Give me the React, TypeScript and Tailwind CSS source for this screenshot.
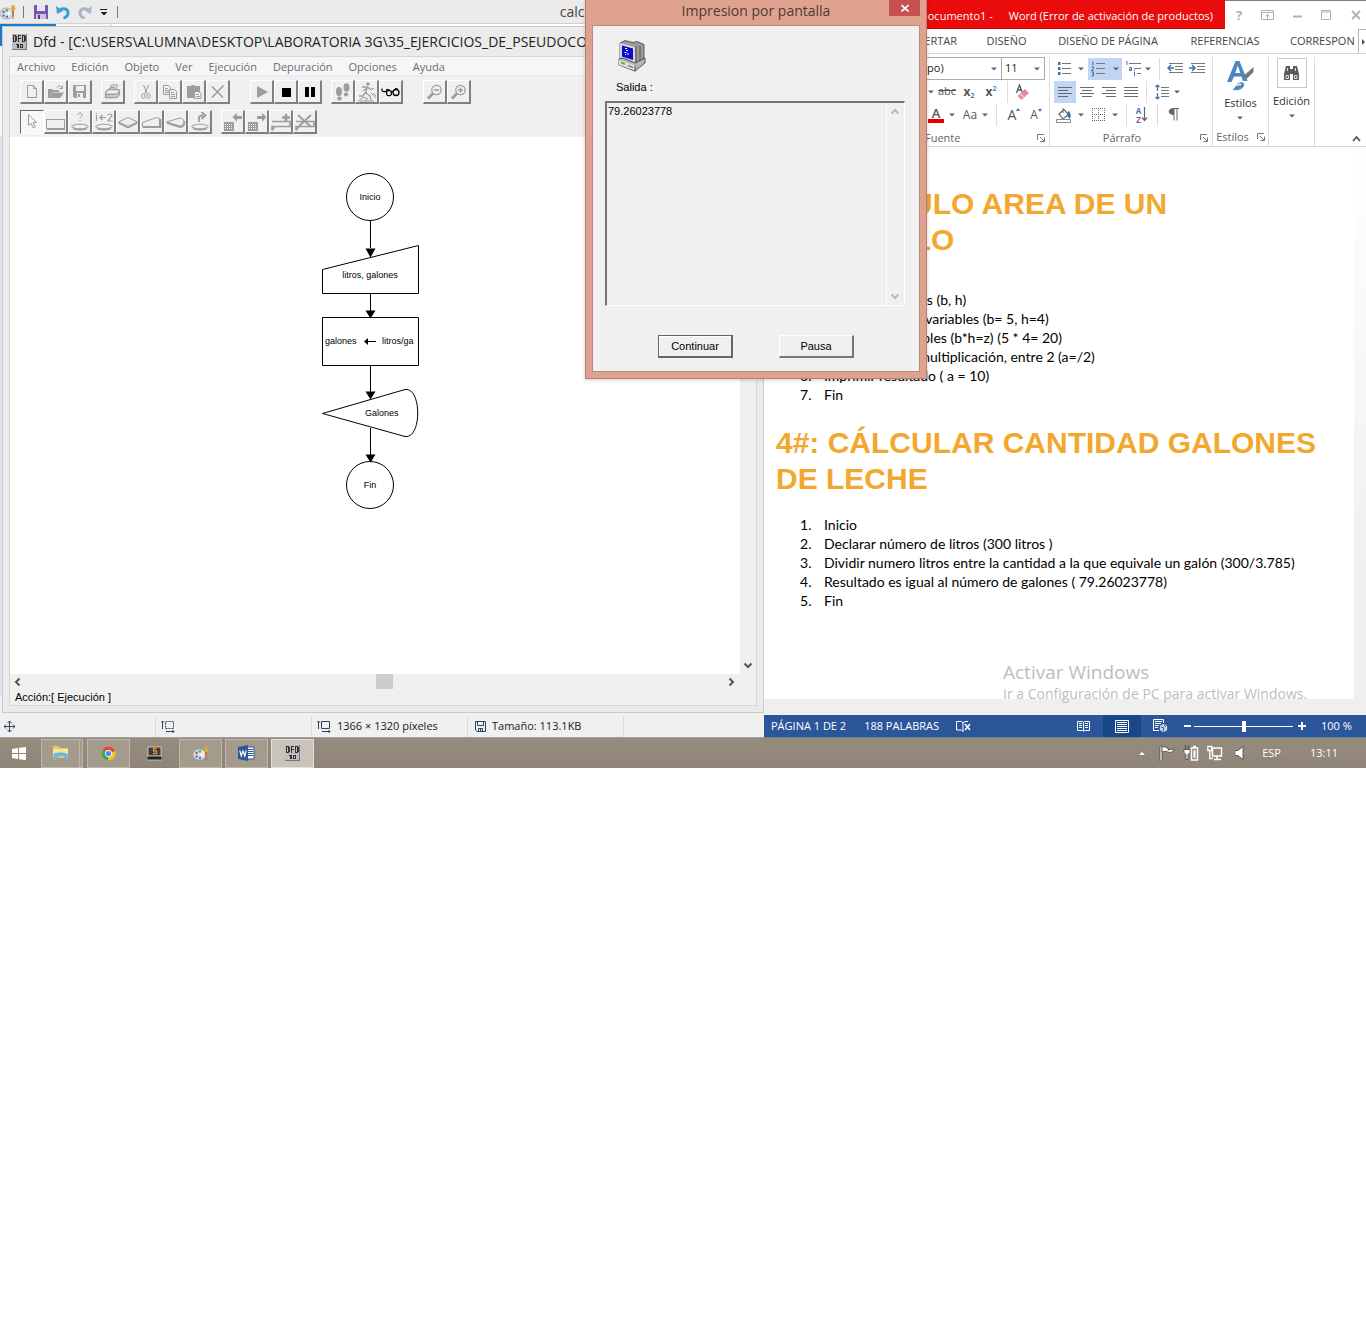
import React from "react";

type Kids = { children?: React.ReactNode };

/* ---------- shared pieces ---------- */

function Caret({ className = "text-[#666]" }: { className?: string }) {
  return (
    <svg width="6" height="4" viewBox="0 0 6 4" className={"shrink-0 " + className} aria-hidden="true">
      <path d="M0 0.5h6L3 3.5z" fill="currentColor" />
    </svg>
  );
}

function Pic({ w, h, children, crisp }: Kids & { w: number; h: number; crisp?: boolean }) {
  return (
    <svg
      width={w}
      height={h}
      viewBox={`0 0 ${w} ${h}`}
      fill="none"
      className="shrink-0"
      shapeRendering={crisp ? "crispEdges" : "auto"}
      aria-hidden="true"
    >
      {children}
    </svg>
  );
}

function PaletteIcon() {
  return (
    <Pic w={16} h={16}>
      <ellipse cx="6.5" cy="9.5" rx="6.5" ry="5.5" fill="#d5e8f0" stroke="#7fa3b5" strokeWidth="0.8" />
      <circle cx="3.5" cy="8" r="1.4" fill="#e05b3c" />
      <circle cx="6.8" cy="6.4" r="1.4" fill="#5fae4a" />
      <circle cx="3.6" cy="11.6" r="1.3" fill="#4a86d0" />
      <circle cx="7" cy="12.8" r="1.2" fill="#8a55b5" />
      <circle cx="8.6" cy="9.6" r="1.2" fill="#fff" />
      <path d="M12 1l2 0 1.5 4-1.5 2h-2l-1-3z" fill="#e9a33b" />
      <path d="M12 7h2l-0.5 8h-1z" fill="#c8692b" />
    </Pic>
  );
}

function DfdIcon() {
  return (
    <Pic w={15} h={16} crisp>
      <path d="M0 0h15v16H0z" fill="#bdbdbd" />
      <path d="M14 0h1v16H0v-1h14z" fill="#777" />
      <g fill="#333" fillRule="evenodd">
        <path d="M1 1h3v1h1v5H4v1H1zM2 2v5h1V2z" />
        <path d="M6 1h3v1H7v2h2v1H7v3H6z" />
        <path d="M10 1h3v1h1v5h-1v1h-3zM11 2v5h1V2z" />
        <path d="M4 10h3v4H5v-3H4zM8 10h3v4H8zM9 11v2h1v-2z" />
      </g>
    </Pic>
  );
}

/* ---------- flowchart editor toolbar ---------- */

const G = "#9d9d9d";

function Tool({ label, children, pressed }: Kids & { label: string; pressed?: boolean }) {
  return (
    <button
      type="button"
      aria-label={label}
      aria-pressed={pressed}
      className={
        pressed
          ? "flex h-6 w-6 items-center justify-center border border-b-white border-l-[#696969] border-r-white border-t-[#696969] bg-[#f7f7f7]"
          : "flex h-6 w-6 items-center justify-center border-b-2 border-l border-r-2 border-t border-b-[#808080] border-l-white border-r-[#808080] border-t-white bg-[#f0f0f0]"
      }
    >
      {children}
    </button>
  );
}

function ToolSet({ children }: Kids) {
  return <div className="flex">{children}</div>;
}

function FileTools() {
  return (
    <div className="flex pl-[10px]">
      <ToolSet>
        <Tool label="Nuevo">
          <Pic w={16} h={16}>
            <path d="M3.500 1.500h6l3 3v9h-9zM9.500 1.500v3h3" stroke={G} />
          </Pic>
        </Tool>
        <Tool label="Abrir">
          <Pic w={16} h={16}>
            <path d="M0 5h4l1 1h6v2H4l-3 6H0z" fill={G} />
            <path d="M4 8.500h12l-4 5.500H1z" fill={G} />
            <path d="M9 3.500c1-2 4-2 5 .5M14.500 1.500v3h-3" stroke={G} />
          </Pic>
        </Tool>
        <Tool label="Guardar">
          <Pic w={16} h={16} crisp>
            <path d="M1 1h13v13H2l-1-1zM4 2v5h8V2zM5 9v5h6V9z" fill={G} fillRule="evenodd" />
            <path d="M6 10h2v3H6z" fill={G} />
          </Pic>
        </Tool>
      </ToolSet>
      <div className="ml-[9px]">
        <Tool label="Imprimir">
          <Pic w={17} h={16}>
            <path d="M5.500 5.500l2-4.500h6l-2 4.500z" stroke={G} />
            <path d="M7 3.500h4M1.500 8.500l3-3h9l2 1v4l-3 3h-11zM1.500 10.500h11l3-3" stroke={G} strokeWidth="1.300" />
            <path d="M2 9h10v4H2z" fill={G} opacity=".3" />
          </Pic>
        </Tool>
      </div>
      <div className="ml-[9px] flex">
        <Tool label="Cortar">
          <Pic w={16} h={16}>
            <path d="M5.500 1l3.500 8.500M10.500 1L7 9.500" stroke={G} />
            <ellipse cx="5.500" cy="12" rx="1.600" ry="2.500" stroke={G} />
            <ellipse cx="10.500" cy="12" rx="1.600" ry="2.500" stroke={G} />
          </Pic>
        </Tool>
        <Tool label="Copiar">
          <Pic w={16} h={16}>
            <path d="M1.500 1.500h5l2 2v7h-7zM3 4.500h3M3 6.500h4M3 8.500h4" stroke={G} />
            <path d="M7.500 5.500h5l2 2v7h-7z" fill="#f0f0f0" stroke={G} />
            <path d="M9 8.500h3M9 10.500h4M9 12.500h4" stroke={G} />
          </Pic>
        </Tool>
        <Tool label="Pegar">
          <Pic w={16} h={16}>
            <path d="M1 2h4l1-1h2l1 1h5v12H1z" fill={G} />
            <path d="M8.500 7.500h4l2.500 2v5h-6.500z" fill="#f0f0f0" stroke={G} />
            <path d="M10 10.500h3M10 12.500h4" stroke={G} />
          </Pic>
        </Tool>
        <Tool label="Eliminar">
          <Pic w={16} h={16}>
            <path d="M2 2.500l11 11M13.500 1.500L2 13.500" stroke={G} strokeWidth="1.600" />
          </Pic>
        </Tool>
      </div>
      <div className="ml-5 flex">
        <Tool label="Ejecutar">
          <Pic w={14} h={14}>
            <path d="M2 1l11 6-11 6z" fill={G} />
          </Pic>
        </Tool>
        <Tool label="Detener">
          <Pic w={10} h={10} crisp>
            <path d="M1 1h9v9H1z" fill="#000" />
          </Pic>
        </Tool>
        <Tool label="Pausa">
          <Pic w={12} h={10} crisp>
            <path d="M1 0h4v10H1zM7 0h4v10H7z" fill="#000" />
          </Pic>
        </Tool>
      </div>
      <div className="ml-[9px] flex">
        <Tool label="Paso simple">
          <Pic w={18} h={18}>
            <ellipse cx="5" cy="8.500" rx="3" ry="4.500" fill={G} />
            <ellipse cx="5.500" cy="15.500" rx="2.200" ry="2" fill={G} />
            <ellipse cx="12.500" cy="4.500" rx="3" ry="4.300" fill={G} />
            <ellipse cx="12" cy="11.500" rx="2.200" ry="2" fill={G} />
          </Pic>
        </Tool>
        <Tool label="Ejecutar hasta">
          <Pic w={20} h={20}>
            <circle cx="11" cy="2" r="1.800" fill={G} />
            <path d="M5 5l5 0 4 2.500 3-1M10 5.500L9 11l4 3 1 4M9 10l-3 4-4 0M10 6l-4 3" stroke={G} strokeWidth="1.300" />
            <path d="M1 19l6-4 3 2M14 11l5 5M16 11l3 3M3 19h14M8 19l3-3" stroke={G} />
          </Pic>
        </Tool>
        <Tool label="Depurador">
          <Pic w={19} h={12}>
            <path d="M1 2.500v2c1 2 3 1 4 1M5 6l1-2.500 3 .5" stroke="#000" strokeWidth="1.200" />
            <rect x="5.700" y="4.600" width="4.600" height="5" rx="1.500" stroke="#000" strokeWidth="1.300" />
            <circle cx="15" cy="6.500" r="3" stroke="#000" strokeWidth="1.300" />
            <path d="M10.500 5.500h2M14 2.500l3 .5" stroke="#000" />
          </Pic>
        </Tool>
      </div>
      <div className="ml-5 flex">
        <Tool label="Alejar">
          <Pic w={16} h={16}>
            <circle cx="9.500" cy="6" r="4.700" stroke={G} strokeWidth="1.300" />
            <path d="M7 6h5" stroke={G} strokeWidth="1.600" />
            <path d="M6 9.500l-5 5" stroke={G} strokeWidth="2.600" />
          </Pic>
        </Tool>
        <Tool label="Acercar">
          <Pic w={16} h={16}>
            <circle cx="9.500" cy="6" r="4.700" stroke={G} strokeWidth="1.300" />
            <path d="M7 6h5M9.500 3.500v5" stroke={G} strokeWidth="1.600" />
            <path d="M6 9.500l-5 5" stroke={G} strokeWidth="2.600" />
          </Pic>
        </Tool>
      </div>
    </div>
  );
}

function ObjectTools() {
  return (
    <div className="flex pl-[10px]">
      <ToolSet>
        <Tool label="Cursor" pressed>
          <Pic w={12} h={18}>
            <path d="M2.500 1.500v11l2.500-2.300 2.200 4.800 2-.9-2.200-4.700h3.500z" stroke={G} />
          </Pic>
        </Tool>
        <Tool label="Asignación">
          <Pic w={20} h={18} crisp>
            <path d="M0 6h19v10H0zM1 7v8h17V7z" fill={G} fillRule="evenodd" />
            <path d="M1 15h18v2H1z" fill={G} />
          </Pic>
        </Tool>
        <Tool label="Ciclo mientras">
          <Pic w={20} h={20}>
            <path d="M8 3c0-2.500 4-2.500 4 0 0 1.500-2 1.500-2 3.500M10 8v1.200" stroke={G} />
            <path d="M1.500 14.500c3-3 14-3 17 0-3 3-14 3-17 0z" stroke={G} />
            <path d="M3 16.500c4 1.500 10 1.500 14 0" stroke={G} strokeWidth="1.500" />
          </Pic>
        </Tool>
        <Tool label="Ciclo para">
          <Pic w={20} h={20}>
            <path d="M2.500 3v6M2.500 1v1M6 5.500h6M8.500 3L6 5.500 8.500 8M14 3.500c0-2 4-2 4 0L14 9h4.500" stroke={G} strokeWidth="1.200" />
            <path d="M1.500 14.500c3-3 14-3 17 0-3 3-14 3-17 0z" stroke={G} />
            <path d="M3 16.500c4 1.500 10 1.500 14 0" stroke={G} strokeWidth="1.500" />
          </Pic>
        </Tool>
        <Tool label="Decisión">
          <Pic w={20} h={16}>
            <path d="M.5 8L10 3.500 19.500 8 10 12.500z" stroke={G} />
            <path d="M1 9l9 4.500L19 9" stroke={G} strokeWidth="1.800" />
          </Pic>
        </Tool>
        <Tool label="Lectura">
          <Pic w={20} h={16}>
            <path d="M.5 8.500l14-5 3 1v8H.5z" stroke={G} />
            <path d="M.5 13h18V5" stroke={G} strokeWidth="1.800" />
          </Pic>
        </Tool>
        <Tool label="Salida">
          <Pic w={20} h={16}>
            <path d="M.5 8L14 4c5 0 5 8 0 8z" stroke={G} />
            <path d="M1 9l13 4c4 0 5-3 4-6" stroke={G} strokeWidth="1.800" />
          </Pic>
        </Tool>
        <Tool label="Llamada">
          <Pic w={20} h={20}>
            <path d="M9 10V5.500c0-1.500 1-2 4-2M11.500 0l4 3.500-4 3.500" stroke={G} strokeWidth="1.800" />
            <path d="M1.500 14.500c3-3 14-3 17 0-3 3-14 3-17 0z" stroke={G} />
            <path d="M3 16.500c4 1.500 10 1.500 14 0" stroke={G} strokeWidth="1.500" />
          </Pic>
        </Tool>
      </ToolSet>
      <div className="ml-[9px] flex">
        <Tool label="Subprograma anterior">
          <Pic w={20} h={20}>
            <path d="M1 10h10v9H1z" fill={G} />
            <path d="M9.500 5L14 1v3h5v3h-5v3z" fill={G} />
            <path d="M2 12.500h8M2 14.500h8M2 16.500h8" stroke="#f0f0f0" strokeDasharray="1 1" />
          </Pic>
        </Tool>
        <Tool label="Subprograma siguiente">
          <Pic w={20} h={20}>
            <path d="M1 10h10v9H1z" fill={G} />
            <path d="M19.500 5L15 1v3h-5v3h5v3z" fill={G} />
            <path d="M2 12.500h8M2 14.500h8M2 16.500h8" stroke="#f0f0f0" strokeDasharray="1 1" />
          </Pic>
        </Tool>
        <Tool label="Nuevo subprograma">
          <Pic w={20} h={18}>
            <path d="M1 8.500h18v5H1v4M19 13.500H4l-3 4" stroke={G} strokeWidth="1.700" />
            <path d="M11 4.500h8M15 1v7" stroke={G} strokeWidth="2.600" />
          </Pic>
        </Tool>
        <Tool label="Eliminar subprograma">
          <Pic w={20} h={18}>
            <path d="M1 8.500h18v5H1v4M19 13.500H4l-3 4" stroke={G} strokeWidth="1.700" />
            <path d="M3 2l13 12M16 2L3 14" stroke={G} strokeWidth="1.800" />
          </Pic>
        </Tool>
      </div>
    </div>
  );
}

/* ---------- flowchart ---------- */

function Flowchart() {
  return (
    <svg
      width="120"
      height="350"
      viewBox="310 165 120 350"
      className="ml-[300px] mt-7 block font-['Liberation_Sans',sans-serif] text-[9px]"
      role="img"
      aria-label="Diagrama de flujo"
    >
      <g fill="none" stroke="#000">
        <circle cx="370" cy="197" r="23.500" />
        <path d="M370.500 221v27M370.500 294v17M370.500 366v26M370.500 428v27" />
        <path d="M322.500 269.500L418.500 245.500V293.500H322.500z" />
        <path d="M322.500 317.500H418.500V365.500H322.500z" />
        <path d="M322.500 413.500L405 389.500C422 387 422 439 405 436.500z" />
        <circle cx="370" cy="485" r="23.500" />
        <path d="M365 341.500h11" />
      </g>
      <path
        d="M365.500 248.500h10l-5 9zM365.500 310.500h10l-5 8zM365.500 391.500h10l-5 8zM365.500 454.500h10l-5 8zM364 341.500l4-3.500v7z"
        fill="#000"
      />
      <g fill="#000">
        <text x="370" y="200" textAnchor="middle">Inicio</text>
        <text x="370" y="278" textAnchor="middle">litros, galones</text>
        <text x="325" y="344">galones</text>
        <text x="382" y="344">litros/ga</text>
        <text x="365" y="416">Galones</text>
        <text x="370" y="488" textAnchor="middle">Fin</text>
      </g>
    </svg>
  );
}

function Arrow({ dir }: { dir: "left" | "right" | "down" | "up" }) {
  const d = {
    left: "M6.500 1.500L3 5l3.500 3.500",
    right: "M3.500 1.500L7 5 3.500 8.500",
    down: "M1.500 3.500L5 7l3.500-3.500",
    up: "M1.500 6.500L5 3l3.500 3.500",
  }[dir];
  return (
    <Pic w={10} h={10}>
      <path d={d} stroke="currentColor" strokeWidth="2" />
    </Pic>
  );
}

const menus = ["Archivo", "Edición", "Objeto", "Ver", "Ejecución", "Depuración", "Opciones", "Ayuda"];

function FlowEditor() {
  return (
    <section className="min-w-0 flex-1 border border-[#cbcbcb] bg-[#ebebeb] px-[6px] pb-[6px]">
      <header className="flex h-[29px] items-center gap-1.5 overflow-hidden pl-[3px] text-[#222]">
        <DfdIcon />
        <h1 className="whitespace-nowrap text-[14px]">
          Dfd - [C:\USERS\ALUMNA\DESKTOP\LABORATORIA 3G\35_EJERCICIOS_DE_PSEUDOCODIGO]
        </h1>
      </header>
      <div className="border border-[#d6d6d6] bg-[#f0f0f0]">
        <nav className="flex h-[19px] items-center gap-4 border-b border-[#e8e8ee] bg-[#f5f6f7] pl-[7px] pt-0.5 text-[11px] text-[#6d6d6d]">
          {menus.map((m) => (
            <button key={m} type="button">
              {m}
            </button>
          ))}
        </nav>
        <div className="flex h-[61px] flex-col gap-[6px] pt-[4px]">
          <FileTools />
          <ObjectTools />
        </div>
        <div className="flex">
          <div className="h-[537px] min-w-0 flex-1 bg-white">
            <Flowchart />
          </div>
          <div className="flex w-4 flex-col items-center justify-end pb-1 text-[#555]">
            <Arrow dir="down" />
          </div>
        </div>
        <div className="flex h-4 items-start justify-between pl-[3px] pr-5 text-[#555]">
          <div className="pt-[3px]">
            <Arrow dir="left" />
          </div>
          <div className="ml-5 h-[15px] w-[17px] bg-[#cdcdcd]" />
          <div className="pt-[3px]">
            <Arrow dir="right" />
          </div>
        </div>
        <p className="pb-px pl-[5px] font-['Liberation_Sans',sans-serif] text-[11px] leading-[14px] text-black">
          Acción:[ Ejecución ]
        </p>
      </div>
    </section>
  );
}

function QuickAccess() {
  return (
    <header className="flex h-[23px] items-center overflow-hidden bg-[#ebebeb]">
      <PaletteIcon />
      <span className="ml-[7px] h-3 w-px bg-[#777]" />
      <button type="button" aria-label="Guardar" className="ml-[10px]">
        <Pic w={14} h={14}>
          <path d="M0 0h14v14H0z" fill="#7a56b4" />
          <path d="M3 0h8v6H3z" fill="#e8e4f2" />
          <path d="M2 9h10v5H2z" fill="#c9c3dd" />
          <path d="M4 10h2v4H4z" fill="#5b3d94" />
        </Pic>
      </button>
      <button type="button" aria-label="Deshacer" className="ml-2">
        <Pic w={14} h={14}>
          <path d="M4 4.500c5-2 8 0 8 3.500 0 2-1.500 4-4.500 5.500" stroke="#3a9fd8" strokeWidth="3" />
          <path d="M0 1l1 8 6-3z" fill="#3a9fd8" />
        </Pic>
      </button>
      <button type="button" aria-label="Rehacer" className="ml-2">
        <Pic w={14} h={14}>
          <path d="M10 4.500c-5-2-8 0-8 3.500 0 2 1.500 4 4.500 5.500" stroke="#a9b5c6" strokeWidth="3" />
          <path d="M14 1l-1 8-6-3z" fill="#a9b5c6" />
        </Pic>
      </button>
      <button type="button" aria-label="Personalizar" className="ml-2">
        <Pic w={7} h={8} crisp>
          <path d="M0 1h7v1H0zM0 4h7L3.500 7.500z" fill="#222" />
        </Pic>
      </button>
      <span className="ml-[10px] h-3 w-px bg-[#777]" />
      <span className="ml-auto mr-[159px] text-[14px] text-[#444]">calculo</span>
    </header>
  );
}

function PaintStatus() {
  const cell = "flex items-center gap-1.5 border-r border-[#dadada]";
  return (
    <footer className="grid h-[25px] grid-cols-[156fr_156fr_156fr_156fr_140fr] border-b border-[#a0a0a0] bg-[#f0f0f0] pt-[3px] text-[11px] text-[#1a1a1a]">
      <div className={cell + " pl-1"}>
        <Pic w={11} h={11}>
          <path d="M5.500 0v11M0 5.500h11M3.500 2L5.500 0l2 2M3.500 9l2 2 2-2M2 3.500L0 5.500l2 2M9 3.500l2 2-2 2" stroke="#2d4360" />
        </Pic>
      </div>
      <div className={cell + " pl-[5px]"}>
        <Pic w={14} h={13}>
          <path d="M1.500 9V1M0 2.500L1.500 1 3 2.500M5 11.500h8M11.500 10l1.500 1.500-1.500 1.500" stroke="#2d4360" />
          <path d="M4.500 1.500h8v7h-8z" stroke="#2d4360" strokeDasharray="2 1" />
        </Pic>
      </div>
      <div className={cell + " pl-[5px]"}>
        <Pic w={14} h={13}>
          <path d="M1.500 9V1M0 2.500L1.500 1 3 2.500M5 11.500h8M11.500 10l1.500 1.500-1.500 1.500M4.500 1.500h8v7h-8z" stroke="#2d4360" />
        </Pic>
        <span className="whitespace-nowrap">1366 × 1320 píxeles</span>
      </div>
      <div className={cell + " pl-[7px]"}>
        <Pic w={11} h={11}>
          <path d="M.5.500h10v10H2L.5 9zM2.500.500v4h6v-4M3.500 10.500v-3h4v3M5.500 8v2" stroke="#2d4360" />
        </Pic>
        <span className="whitespace-nowrap">Tamaño: 113.1KB</span>
      </div>
      <div />
    </footer>
  );
}

function LeftSide() {
  return (
    <div className="flex min-w-0 flex-col">
      <QuickAccess />
      <div className="flex h-[3px] border-t border-[#d0d0d0] bg-white">
        <div className="w-14 bg-[#1979ca]" />
        <div className="w-14 border-r border-[#dadada] bg-[#f5f6f7]" />
      </div>
      <div className="flex flex-1">
        <div className="flex w-0.5 flex-col">
          <div className="h-5 bg-[#1979ca]" />
          <div className="h-[90px] bg-[#f5f6f7]" />
          <div className="flex-1 bg-[#dce4f1]" />
          <div className="h-4 bg-[#f0f0f0]" />
        </div>
        <FlowEditor />
      </div>
      <PaintStatus />
    </div>
  );
}

/* ---------- word processor ---------- */

const tabs: [string, string][] = [
  ["INSERTAR", "w-[59px] justify-end"],
  ["DISEÑO", "w-[41px] justify-center"],
  ["DISEÑO DE PÁGINA", "w-[104px] justify-center"],
  ["REFERENCIAS", "w-[72px] justify-center"],
];

function WordTitle() {
  return (
    <header className="flex h-[29px] items-stretch">
      <div className="flex w-[461px] items-center justify-end border-b border-[#c00] bg-[#ea0c0c] pr-3 pt-1 text-[11px] text-white">
        <h2 className="flex gap-4 whitespace-nowrap">
          <span>Documento1 -</span> <span>Word (Error de activación de productos)</span>
        </h2>
      </div>
      <div className="flex flex-1 items-center justify-between border-t border-[#808080] pl-[11px] pr-[5px] text-[#b0b0b0]">
        <button type="button" className="text-[13px] font-bold leading-none">
          ?
        </button>
        <button type="button" aria-label="Opciones de presentación">
          <Pic w={13} h={10}>
            <path d="M.5.500h12v9H.5zM.5 2.500h12M6.500 9V4.500M4.500 6.500l2-2 2 2" stroke="currentColor" />
          </Pic>
        </button>
        <button type="button" aria-label="Minimizar">
          <Pic w={10} h={8}>
            <path d="M0 5.500h9" stroke="currentColor" strokeWidth="2" />
          </Pic>
        </button>
        <button type="button" aria-label="Maximizar">
          <Pic w={11} h={10}>
            <path d="M.5.500h9v9H.5zM.5 2h9" stroke="currentColor" />
          </Pic>
        </button>
        <button type="button" aria-label="Cerrar">
          <Pic w={10} h={10}>
            <path d="M1 1l8 8M9 1L1 9" stroke="currentColor" strokeWidth="1.800" />
          </Pic>
        </button>
      </div>
    </header>
  );
}

function Box({ className, children, label }: Kids & { className: string; label: string }) {
  return (
    <button type="button" aria-label={label} className={"flex shrink-0 items-center justify-center " + className}>
      {children}
    </button>
  );
}

function Rule({ className = "" }: { className?: string }) {
  return <span className={"h-[22px] w-px shrink-0 bg-[#dcdcdc] " + className} />;
}

function Launcher() {
  return (
    <button type="button" aria-label="Más opciones">
      <Pic w={8} h={8}>
        <path d="M.5 6V.5H7M3 3l4 4M7.500 3.500v4h-4" stroke="#777" />
      </Pic>
    </button>
  );
}

function Lines({ kind }: { kind: "l" | "c" | "r" | "j" }) {
  const d = {
    l: "M0 .5h14M0 3.500h10M0 6.500h14M0 9.500h10",
    c: "M0 .5h14M2 3.500h10M0 6.500h14M2 9.500h10",
    r: "M0 .5h14M4 3.500h10M0 6.500h14M4 9.500h10",
    j: "M0 .5h14M0 3.500h14M0 6.500h14M0 9.500h14",
  }[kind];
  return (
    <Pic w={14} h={10} crisp>
      <path d={d} stroke="#6a6a6a" />
    </Pic>
  );
}

function FontGroup() {
  return (
    <div className="flex w-[286px] flex-col items-end border-r border-[#dcdcdc]">
      <div className="flex h-[23px] shrink-0 pr-[4px] text-[11px] text-[#222]">
        <label className="relative flex w-[154px] border border-[#ababab]">
          <select aria-label="Fuente" className="w-full appearance-none bg-white pl-[15px]">
            <option>Calibri (Cuerpo)</option>
          </select>
          <span className="pointer-events-none absolute inset-y-0 right-1 flex items-center">
            <Caret />
          </span>
        </label>
        <label className="relative flex w-[43px] border border-l-0 border-[#ababab]">
          <select aria-label="Tamaño" className="w-full appearance-none bg-white pl-[3px]">
            <option>11</option>
          </select>
          <span className="pointer-events-none absolute inset-y-0 right-1 flex items-center">
            <Caret />
          </span>
        </label>
      </div>
      <div className="flex h-[23px] shrink-0 items-center pr-4 text-[#555]">
        <Box label="Subrayado" className="w-[10px]">
          <Caret />
        </Box>
        <Box label="Tachado" className="w-[22px] text-[11px] line-through">
          abc
        </Box>
        <Box label="Subíndice" className="w-[22px]">
          <span className="text-[12px] font-bold leading-none">x</span>
          <span className="self-end text-[7px] font-bold leading-[4px] text-[#4a7fb8]">2</span>
        </Box>
        <Box label="Superíndice" className="w-[22px]">
          <span className="text-[12px] font-bold leading-none">x</span>
          <span className="self-start text-[7px] font-bold leading-[6px] text-[#4a7fb8]">2</span>
        </Box>
        <Rule className="mx-[5px]" />
        <Box label="Borrar formato" className="w-[20px]">
          <Pic w={16} h={16}>
            <path d="M1.500 9L4.500 1 7.500 9M2.500 6h4" stroke="#555" strokeWidth="1.300" />
            <path d="M2.500 12l7.500-7 4 4-7.500 7z" fill="#e58a9a" />
            <path d="M5 9.500l4 4" stroke="#fff" strokeWidth="1" />
          </Pic>
        </Box>
      </div>
      <div className="flex h-[23px] shrink-0 items-center pr-[2px] text-[#555]">
        <Box label="Color de fuente" className="w-[20px]">
          <span className="block w-4 border-b-4 border-[#e80000] text-center text-[13px] font-semibold leading-[12px]">A</span>
        </Box>
        <Box label="Colores" className="w-[12px]">
          <Caret />
        </Box>
        <Box label="Mayúsculas" className="w-[24px] text-[12px]">
          Aa
        </Box>
        <Box label="Opciones de mayúsculas" className="w-[6px]">
          <Caret />
        </Box>
        <Rule className="ml-[8px] mr-[6px]" />
        <Box label="Aumentar" className="w-[22px]">
          <span className="text-[14px] leading-none">A</span>
          <span className="self-start">
            <Pic w={4} h={3}>
              <path d="M0 3h4L2 0z" fill="#3f6fb0" />
            </Pic>
          </span>
        </Box>
        <Box label="Disminuir" className="w-[22px]">
          <span className="text-[12px] leading-none">A</span>
          <span className="self-start">
            <Pic w={4} h={3}>
              <path d="M0 0h4L2 3z" fill="#3f6fb0" />
            </Pic>
          </span>
        </Box>
      </div>
      <div className="flex w-full flex-1 items-center justify-between pl-[161px] pr-[4px] pt-1 text-[11px] leading-4 text-[#666]">
        <span>Fuente</span>
        <Launcher />
      </div>
    </div>
  );
}

function ParagraphGroup() {
  return (
    <div className="flex w-[163px] flex-col border-r border-[#dcdcdc]">
      <div className="flex h-[23px] shrink-0 items-center pl-[4px]">
        <Box label="Viñetas" className="w-[20px]">
          <Pic w={14} h={15}>
            <path d="M5 2.500h9M5 7.500h9M5 12.500h9" stroke="#777" />
            <path d="M1 1h2.500v3H1zM1 6h2.500v3H1zM1 11h2.500v3H1z" fill="#3f6fb0" />
          </Pic>
        </Box>
        <Box label="Estilos de viñeta" className="w-[14px]">
          <Caret />
        </Box>
        <div className="flex h-[22px] bg-[#c2d5f2]">
          <Box label="Numeración" className="w-[21px]">
            <Pic w={15} h={16}>
              <path d="M5 2.500h9M5 7.500h9M5 12.500h9" stroke="#777" />
              <path d="M1 1h1v3.500M0.500 6h2v1.500L.5 9.500h2M.5 11h2v4h-2M1 13h1.500" stroke="#3f6fb0" />
            </Pic>
          </Box>
          <Box label="Estilos de numeración" className="w-[13px]">
            <Caret />
          </Box>
        </div>
        <Box label="Lista multinivel" className="w-[22px]">
          <Pic w={17} h={16}>
            <path d="M4 2.500h12M9 7.500h7M12 12.500h4" stroke="#777" />
            <path d="M1 .5h1V4M4.500 6.500h2v3h-2v-1.500h2M9.500 11v4M9.500 9v1" stroke="#3f6fb0" />
          </Pic>
        </Box>
        <Box label="Estilos de lista" className="w-[8px]">
          <Caret />
        </Box>
        <Rule className="ml-[7px] mr-[4px]" />
        <Box label="Disminuir sangría" className="w-[22px]">
          <Pic w={16} h={11}>
            <path d="M2 .5h14M8 3.500h8M8 6.500h8M2 9.500h14" stroke="#777" />
            <path d="M1 5h6M4 2L1 5l3 3" stroke="#3f6fb0" strokeWidth="1.500" />
          </Pic>
        </Box>
        <Box label="Aumentar sangría" className="w-[22px]">
          <Pic w={16} h={11}>
            <path d="M2 .5h14M8 3.500h8M8 6.500h8M2 9.500h14" stroke="#777" />
            <path d="M0 5h6M3 2l3 3-3 3" stroke="#3f6fb0" strokeWidth="1.500" />
          </Pic>
        </Box>
      </div>
      <div className="flex h-[23px] shrink-0 items-center pl-[4px]">
        <Box label="Alinear a la izquierda" className="h-[22px] w-[22px] bg-[#c2d5f2]">
          <Lines kind="l" />
        </Box>
        <Box label="Centrar" className="w-[22px]">
          <Lines kind="c" />
        </Box>
        <Box label="Alinear a la derecha" className="w-[22px]">
          <Lines kind="r" />
        </Box>
        <Box label="Justificar" className="w-[22px]">
          <Lines kind="j" />
        </Box>
        <Rule className="mx-[4px]" />
        <Box label="Interlineado" className="w-[22px]">
          <Pic w={15} h={16}>
            <path d="M6 3.500h8M6 6.500h8M6 9.500h8M6 12.500h8" stroke="#777" />
            <path d="M2.500 1v6M2.500 9v6M.5 3l2-2 2 2M.5 13l2 2 2-2" stroke="#3f6fb0" strokeWidth="1.200" />
          </Pic>
        </Box>
        <Box label="Opciones de interlineado" className="w-[8px]">
          <Caret />
        </Box>
      </div>
      <div className="flex h-[23px] shrink-0 items-center pl-[4px]">
        <Box label="Sombreado" className="w-[20px]">
          <Pic w={17} h={16}>
            <path d="M3 7l5-4.500 4.500 5L7 12z" stroke="#666" strokeWidth="1.200" />
            <path d="M7 1v5" stroke="#666" />
            <path d="M12 4c3 1 3 5 2 8l-3-3z" fill="#3f6fb0" />
            <path d="M.5 12.500h14v3H.5z" stroke="#888" fill="#fff" />
          </Pic>
        </Box>
        <Box label="Colores de sombreado" className="w-[14px]">
          <Caret />
        </Box>
        <Box label="Bordes" className="w-[20px]">
          <Pic w={13} h={13} crisp>
            <path d="M0 .5h13M0 6.500h13M0 12.500h13M.5 0v13M6.500 0v13M12.500 0v13" stroke="#666" strokeDasharray="1 1" />
          </Pic>
        </Box>
        <Box label="Estilos de borde" className="w-[14px]">
          <Caret />
        </Box>
        <Rule className="mx-[4px]" />
        <Box label="Ordenar" className="w-[22px]">
          <span className="flex flex-col text-[8px] font-bold leading-[9px]">
            <span className="text-[#3f6fb0]">A</span>
            <span className="text-[#8a4fb0]">Z</span>
          </span>
          <Pic w={7} h={15}>
            <path d="M3.500 0v13M1 10.500l2.500 3 2.500-3" stroke="#666" strokeWidth="1.200" />
          </Pic>
        </Box>
        <Rule className="mx-[4px]" />
        <Box label="Mostrar todo" className="w-[22px]">
          <Pic w={11} h={13}>
            <path d="M5 .5h6M6 .5v12M9 .5v12" stroke="#666" />
            <path d="M6 0C-1 0-1 7 6 7z" fill="#666" />
          </Pic>
        </Box>
      </div>
      <div className="flex flex-1 items-center justify-end gap-[59px] pr-[4px] pt-1 text-[11px] leading-4 text-[#666]">
        <span>Párrafo</span>
        <Launcher />
      </div>
    </div>
  );
}

function Ribbon() {
  return (
    <div className="flex h-[93px] border-b border-[#d5d5d5] pt-[3px]">
      <FontGroup />
      <ParagraphGroup />
      <div className="flex w-14 flex-col items-center border-r border-[#dcdcdc] pt-[3px] text-[11px] text-[#333]">
        <button type="button" className="flex flex-col items-center">
          <Pic w={28} h={32}>
            <path d="M1 22L9.500 1h4l8 20h-4.500l-1.600-4.500H8L5.500 22zM9.300 13h5L11.700 5.500z" fill="#4a86c0" fillRule="evenodd" />
            <path d="M27.500 7v5l-7 7-3-3z" fill="#777" />
            <path d="M5 30c4 0 4-7 9-8 4-1 6 3 3 6-3 3-8 3-12 2z" fill="#4a86c0" stroke="#fff" strokeWidth="1" />
            <path d="M11 26c1-2 3-2 4-1" stroke="#fff" strokeWidth="1.500" />
          </Pic>
          <span className="mt-[3px] leading-4">Estilos</span>
          <span className="mt-[5px]">
            <Caret />
          </span>
        </button>
        <div className="flex flex-1 items-center gap-2 pt-2 leading-4 text-[#666]">
          <span>Estilos</span>
          <Launcher />
        </div>
      </div>
      <div className="flex w-[46px] flex-col items-center border-r border-[#dcdcdc] pt-px text-[11px] text-[#333]">
        <button type="button" className="flex flex-col items-center">
          <span className="flex h-[30px] w-[30px] items-center justify-center border border-[#c8c8c8]">
            <Pic w={15} h={14}>
              <path d="M2 0h4v3h3V0h4l2 8v6H9V8H6v6H0V8z" fill="#5a5a5a" />
              <path d="M3.500 2v3M11.500 2v3M2 9.500h2.500v3H2zM10.500 9.500H13v3h-2.500z" stroke="#fff" strokeWidth="0.800" />
            </Pic>
          </span>
          <span className="mt-[5px] leading-4">Edición</span>
          <span className="mt-[5px]">
            <Caret />
          </span>
        </button>
      </div>
      <div className="flex flex-1 items-end justify-end pb-1 pr-[5px]">
        <button type="button" aria-label="Contraer la cinta">
          <Pic w={9} h={7}>
            <path d="M1 6l3.500-4L8 6" stroke="#555" strokeWidth="1.800" />
          </Pic>
        </button>
      </div>
    </div>
  );
}

const triangle = [
  "Inicio",
  "Declarar variables (b, h)",
  "Asignar valor de variables (b= 5, h=4)",
  "Multiplicar variables (b*h=z) (5 * 4= 20)",
  "Dividir total de multiplicación, entre 2 (a=/2)",
  "Imprimir resultado ( a = 10)",
  "Fin",
];

const milk = [
  "Inicio",
  "Declarar número de litros (300 litros )",
  "Dividir numero litros entre la cantidad a la que equivale un galón (300/3.785)",
  "Resultado es igual al número de galones ( 79.26023778)",
  "Fin",
];

function Steps({ items }: { items: string[] }) {
  return (
    <ol className="pl-6 font-[Lato,sans-serif] text-[14px] leading-[19px] text-black">
      {items.map((t, i) => (
        <li key={t} className="flex whitespace-nowrap">
          <span className="w-6">{i + 1}.</span>
          {t}
        </li>
      ))}
    </ol>
  );
}

function Page() {
  const head = "font-['Liberation_Sans',sans-serif] text-[30px] font-bold leading-9 text-[#f2a72e]";
  return (
    <div className="relative flex-1 bg-linear-to-b from-white to-[#efefef] to-80% pb-4">
      <article className="mr-3 h-full bg-white pl-3 pt-[39px]">
        <h3 className={head}>
          3#: CALCULO AREA DE UN
          <br />
          TRIANGULO
        </h3>
        <div className="pt-[13px]">
          <Steps items={triangle} />
        </div>
        <h3 className={head + " pt-[21px]"}>
          4#: CÁLCULAR CANTIDAD GALONES
          <br />
          DE LECHE
        </h3>
        <div className="pt-[18px]">
          <Steps items={milk} />
        </div>
      </article>
      <div className="absolute bottom-[11px] left-[239px] whitespace-nowrap text-[#bdbdbd]">
        <p className="text-[19px] leading-6">Activar Windows</p>
        <p className="text-[14px] leading-5">Ir a Configuración de PC para activar Windows.</p>
      </div>
    </div>
  );
}

function WordStatus() {
  return (
    <footer className="flex h-[23px] items-center border-b border-[#6f7f98] bg-[#2b579a] pl-[7px] text-[11px] text-white">
      <span>PÁGINA 1 DE 2</span>
      <span className="ml-[18px]">188 PALABRAS</span>
      <button type="button" aria-label="Revisión" className="ml-[17px]">
        <Pic w={15} h={13}>
          <path d="M7 11.500L5.500 10H.5V1.500h5L7 3v9M7 3l2-1.500h3" stroke="#fff" />
          <path d="M9 4l5 6M14 4L9 10" stroke="#fff" strokeWidth="1.500" />
        </Pic>
      </button>
      <button type="button" aria-label="Modo de lectura" className="ml-auto">
        <Pic w={13} h={12}>
          <path d="M6.500 11.500L5.500 10.500H.5v-9h5l1 1 1-1h5v9h-5zM6.500 2v9M2 3.500h3M2 5.500h3M2 7.500h3M8 3.500h3M8 5.500h3M8 7.500h3" stroke="#fff" />
        </Pic>
      </button>
      <button type="button" aria-label="Diseño de impresión" className="ml-[13px] flex h-full w-[38px] items-center justify-center bg-[#19478a]">
        <Pic w={14} h={13}>
          <path d="M.5.500h13v12H.5zM2 2.500h10M2 4.500h10M2 6.500h10M2 8.500h10M2 10.500h10" stroke="#fff" />
        </Pic>
      </button>
      <button type="button" aria-label="Diseño web" className="ml-3">
        <Pic w={15} h={14}>
          <path d="M6 11.500H.5V.5h10V4M2 2.500h7M2 4.500h6M2 6.500h4M2 8.500h3" stroke="#fff" />
          <circle cx="10.500" cy="9" r="3.800" fill="#c9d7ee" />
          <path d="M8 8l3 1-1 3M11 6l2 2" stroke="#2b579a" />
        </Pic>
      </button>
      <button type="button" aria-label="Alejar" className="ml-4">
        <Pic w={7} h={8}>
          <path d="M0 4h7" stroke="#fff" strokeWidth="2" />
        </Pic>
      </button>
      <input
        type="range"
        aria-label="Zoom"
        defaultValue={50}
        className="ml-[3px] h-3 w-[99px] appearance-none bg-transparent [&::-webkit-slider-runnable-track]:h-px [&::-webkit-slider-runnable-track]:bg-white [&::-webkit-slider-thumb]:-mt-[5px] [&::-webkit-slider-thumb]:h-[11px] [&::-webkit-slider-thumb]:w-1 [&::-webkit-slider-thumb]:appearance-none [&::-webkit-slider-thumb]:bg-white"
      />
      <button type="button" aria-label="Acercar" className="ml-[5px]">
        <Pic w={8} h={8}>
          <path d="M0 4h8M4 0v8" stroke="#fff" strokeWidth="2" />
        </Pic>
      </button>
      <span className="ml-[15px] w-[45px]">100 %</span>
    </footer>
  );
}

function WordWindow() {
  return (
    <section className="flex min-w-0 flex-col bg-white">
      <WordTitle />
      <nav className="flex h-[25px] items-center gap-[29px] overflow-hidden border-b border-[#d5d5d5] pl-[134px] text-[11px] text-[#444]">
        {tabs.map(([t, w]) => (
          <button key={t} type="button" className={"flex shrink-0 whitespace-nowrap " + w}>
            {t}
          </button>
        ))}
        <div className="flex h-full flex-1 items-center justify-between">
          <button type="button">CORRESPON</button>
          <button type="button" aria-label="Más fichas" className="flex h-6 w-2 items-center justify-end border-l border-t border-[#b5b5b5]">
            <Pic w={4} h={6}>
              <path d="M0 0v6l3-3z" fill="#555" />
            </Pic>
          </button>
        </div>
      </nav>
      <Ribbon />
      <Page />
      <WordStatus />
    </section>
  );
}

/* ---------- output dialog ---------- */

function OutputDialog() {
  const btn = "flex h-[23px] w-[75px] items-center justify-center bg-[#f0f0f0]";
  return (
    <div
      role="dialog"
      aria-label="Impresion por pantalla"
      className="absolute left-[585px] top-0 flex w-[342px] flex-col border border-t-0 border-[#b9806f] bg-[#dfa28f] px-[6px] pb-[6px] shadow-[0_1px_4px_rgba(0,0,0,0.2)]"
    >
      <header className="relative flex h-[25px] justify-center pt-px">
        <h2 className="text-[14px] leading-5 text-[#4b3a35]">Impresion por pantalla</h2>
        <button type="button" aria-label="Cerrar" className="absolute right-0 top-0 flex h-4 w-[31px] items-center justify-center bg-[#c75050]">
          <Pic w={8} h={8}>
            <path d="M.5 1l7 6.500M7.500 1l-7 6.500" stroke="#fff" strokeWidth="1.700" />
          </Pic>
        </button>
      </header>
      <div className="border border-[#b98a7d] bg-[#f0f0f0] pb-[13px] pl-3 pr-[14px] pt-[14px] font-['Liberation_Sans',sans-serif] text-[11px] text-black">
        <div className="pl-[13px]">
          <Pic w={28} h={32}>
            <path d="M2 3L7 0.500l8 2 4-1 7 3v14l-4 4-5 1L2 18z" fill="#9a9a9a" stroke="#444" strokeWidth="0.800" />
            <path d="M2 3l15 4v17L2 18.500z" fill="#d5d5d5" />
            <path d="M4 5.500l11 3v11.500L4 16.500z" fill="#0a0ad0" />
            <path d="M17 7l2-1v17l-2 1z" fill="#777" />
            <path d="M22 6v15" stroke="#555" />
            <path d="M7 8.500h2M8 10.500h2M6.500 12.500h2M9 14h2M7 14.500h1" stroke="#fff" />
            <path d="M1 19l4-1 12 5 10-5v5l-10 8L1 25z" fill="#b5b5b5" stroke="#333" strokeWidth="0.800" />
            <path d="M1 19.500l16 6v5L1 25z" fill="#dedede" />
            <path d="M3 21.500l4 1.500v2l-4-1.500z" fill="#3fc04a" />
            <path d="M10 25.500l5 2M17 25.500v6" stroke="#555" />
          </Pic>
        </div>
        <label htmlFor="salida" className="block pl-[11px] pt-[9px] leading-[13px]">
          Salida :
        </label>
        <div className="mt-[7px] flex border-b border-r border-t-2 border-l-2 border-b-white border-l-[#757575] border-r-white border-t-[#757575]">
          <textarea
            id="salida"
            readOnly
            value="79.26023778"
            className="block h-[202px] min-w-0 flex-1 resize-none bg-[#f0f0f0] pl-px pt-0.5 leading-[13px] outline-none"
          />
          <div className="flex w-[18px] flex-col items-center justify-between border-l border-white py-1 pr-px text-[#bcbcbc]">
            <Arrow dir="up" />
            <Arrow dir="down" />
          </div>
        </div>
        <div className="mt-[29px] flex gap-[46px] pl-[53px]">
          <button type="button" className={btn + " border border-b-2 border-r-2 border-[#666] shadow-[inset_1px_1px_0_#fff]"}>
            Continuar
          </button>
          <button type="button" className={btn + " border border-b-2 border-r-2 border-b-[#777] border-l-white border-r-[#777] border-t-white"}>
            Pausa
          </button>
        </div>
      </div>
    </div>
  );
}

/* ---------- taskbar ---------- */

function Task({ label, children, active, className = "" }: Kids & { label: string; active?: boolean; className?: string }) {
  return (
    <button
      type="button"
      aria-label={label}
      className={
        "flex h-[29px] items-center justify-center border " +
        (active ? "border-[#e4e1dc] bg-[#c9c3ba] " : "border-[#bdb6a9] bg-[#a49b8c] ") +
        className
      }
    >
      {children}
    </button>
  );
}

function Taskbar() {
  return (
    <footer className="flex h-[30px] items-center bg-linear-to-b from-[#968c7c] to-[#8f8478] text-[11px] text-white">
      <button type="button" aria-label="Inicio" className="ml-[12px]">
        <Pic w={14} h={13}>
          <path d="M0 2l6-1v5H0zM7 .8L14 0v6H7zM0 7h6v5L0 11zM7 7h7v6l-7-.8z" fill="#fff" />
        </Pic>
      </button>
      <Task label="Explorador" className="ml-[15px] w-[39px]">
        <Pic w={17} h={16}>
          <path d="M1 1h6l1 2h8v10H1z" fill="#e9c95b" />
          <path d="M1 4h15v5H1z" fill="#f6e7a0" />
          <path d="M2 9c0-2 12-2 13 0l1 6h-3l-1-4H6l-1 4H2z" fill="#69b5e8" />
        </Pic>
      </Task>
      <span className="h-[29px] w-[3px] border-y border-r border-[#bdb6a9] bg-[#a49b8c]" />
      <Task label="Chrome" className="ml-1 w-[43px]">
        <Pic w={15} h={15}>
          <circle cx="7.500" cy="7.500" r="7" fill="#f4c430" />
          <path d="M7.500 7.500L1.500 4A7 7 0 0 1 14 5z" fill="#dd4b39" />
          <path d="M7.500 7.500L1.500 4A7 7 0 0 0 7 14.500z" fill="#3fa757" />
          <circle cx="7.500" cy="7.500" r="3.400" fill="#fff" />
          <circle cx="7.500" cy="7.500" r="2.600" fill="#4a8af4" />
        </Pic>
      </Task>
      <button type="button" aria-label="Editor" className="ml-[17px]">
        <Pic w={15} h={15}>
          <path d="M1 1h13v9H1z" fill="#3c3c3c" stroke="#ddd" strokeWidth="0.800" />
          <path d="M0 10h15v4H0z" fill="#222" stroke="#ccc" strokeWidth="0.800" />
          <path d="M9.500 2.500H6.500v2.500h3v2.500h-3.500" stroke="#f08a24" strokeWidth="1.300" />
        </Pic>
      </button>
      <Task label="Paint" className="ml-[17px] w-[43px]">
        <PaletteIcon />
      </Task>
      <Task label="Word" className="ml-[3px] w-[43px]">
        <Pic w={17} h={16}>
          <path d="M8 2h8v12H8z" fill="#fff" stroke="#2b579a" />
          <path d="M10 4.500h5M10 6.500h5M10 8.500h5M10 10.500h5" stroke="#2b579a" />
          <path d="M0 2l10-2v16L0 14z" fill="#2b579a" />
          <path d="M1.800 5.500L3.200 11 5 6l1.800 5 1.400-5.500" stroke="#fff" strokeWidth="1.200" />
        </Pic>
      </Task>
      <Task label="Dfd" active className="ml-[3px] w-[43px]">
        <DfdIcon />
      </Task>
      <div className="ml-auto flex items-center">
        <button type="button" aria-label="Iconos ocultos">
          <Pic w={8} h={5}>
            <path d="M0 4.500h8L4 .5z" fill="#fff" stroke="#444" strokeWidth="0.500" />
          </Pic>
        </button>
        <span className="ml-[13px]">
          <Pic w={16} h={16}>
            <path d="M1 1h2v15H1z" fill="#fff" stroke="#333" strokeWidth="0.700" />
            <path d="M3 2c3-1 4 1 6 1v2l6-1c-1 3-3 4-6 3-2-1-3-1-6 0z" fill="#fff" stroke="#333" strokeWidth="0.700" />
          </Pic>
        </span>
        <span className="ml-2">
          <Pic w={16} h={16}>
            <path d="M2.500 0v4M5.500 0v4M1 4.500h6v3l-2 2v5H3v-5l-2-2z" fill="#fff" stroke="#333" strokeWidth="0.700" />
            <path d="M8.500 3h6v12h-6z" fill="#8c8274" stroke="#fff" strokeWidth="1.500" />
            <path d="M10 .8h3v2h-3zM10.500 5h2v8h-2z" fill="#fff" />
          </Pic>
        </span>
        <span className="ml-2">
          <Pic w={16} h={16}>
            <path d="M5.500 3h9v8h-9zM7 14.500h7M10 11v3" stroke="#fff" strokeWidth="1.500" />
            <path d="M.8 1.500h4v4h-4zM2.800 6v7.500h3" stroke="#fff" strokeWidth="1.300" />
          </Pic>
        </span>
        <span className="ml-3">
          <Pic w={10} h={14}>
            <path d="M0 4.500h3L8 .5v13l-5-4H0z" fill="#fff" stroke="#333" strokeWidth="0.700" />
          </Pic>
        </span>
        <span className="ml-[17px]">ESP</span>
        <time className="mr-7 ml-[29px]">13:11</time>
      </div>
    </footer>
  );
}

export default function App() {
  return (
    <main className="relative min-h-screen bg-white font-['Open_Sans',sans-serif]">
      <div className="grid grid-cols-[764fr_602fr]">
        <LeftSide />
        <WordWindow />
      </div>
      <Taskbar />
      <OutputDialog />
    </main>
  );
}
